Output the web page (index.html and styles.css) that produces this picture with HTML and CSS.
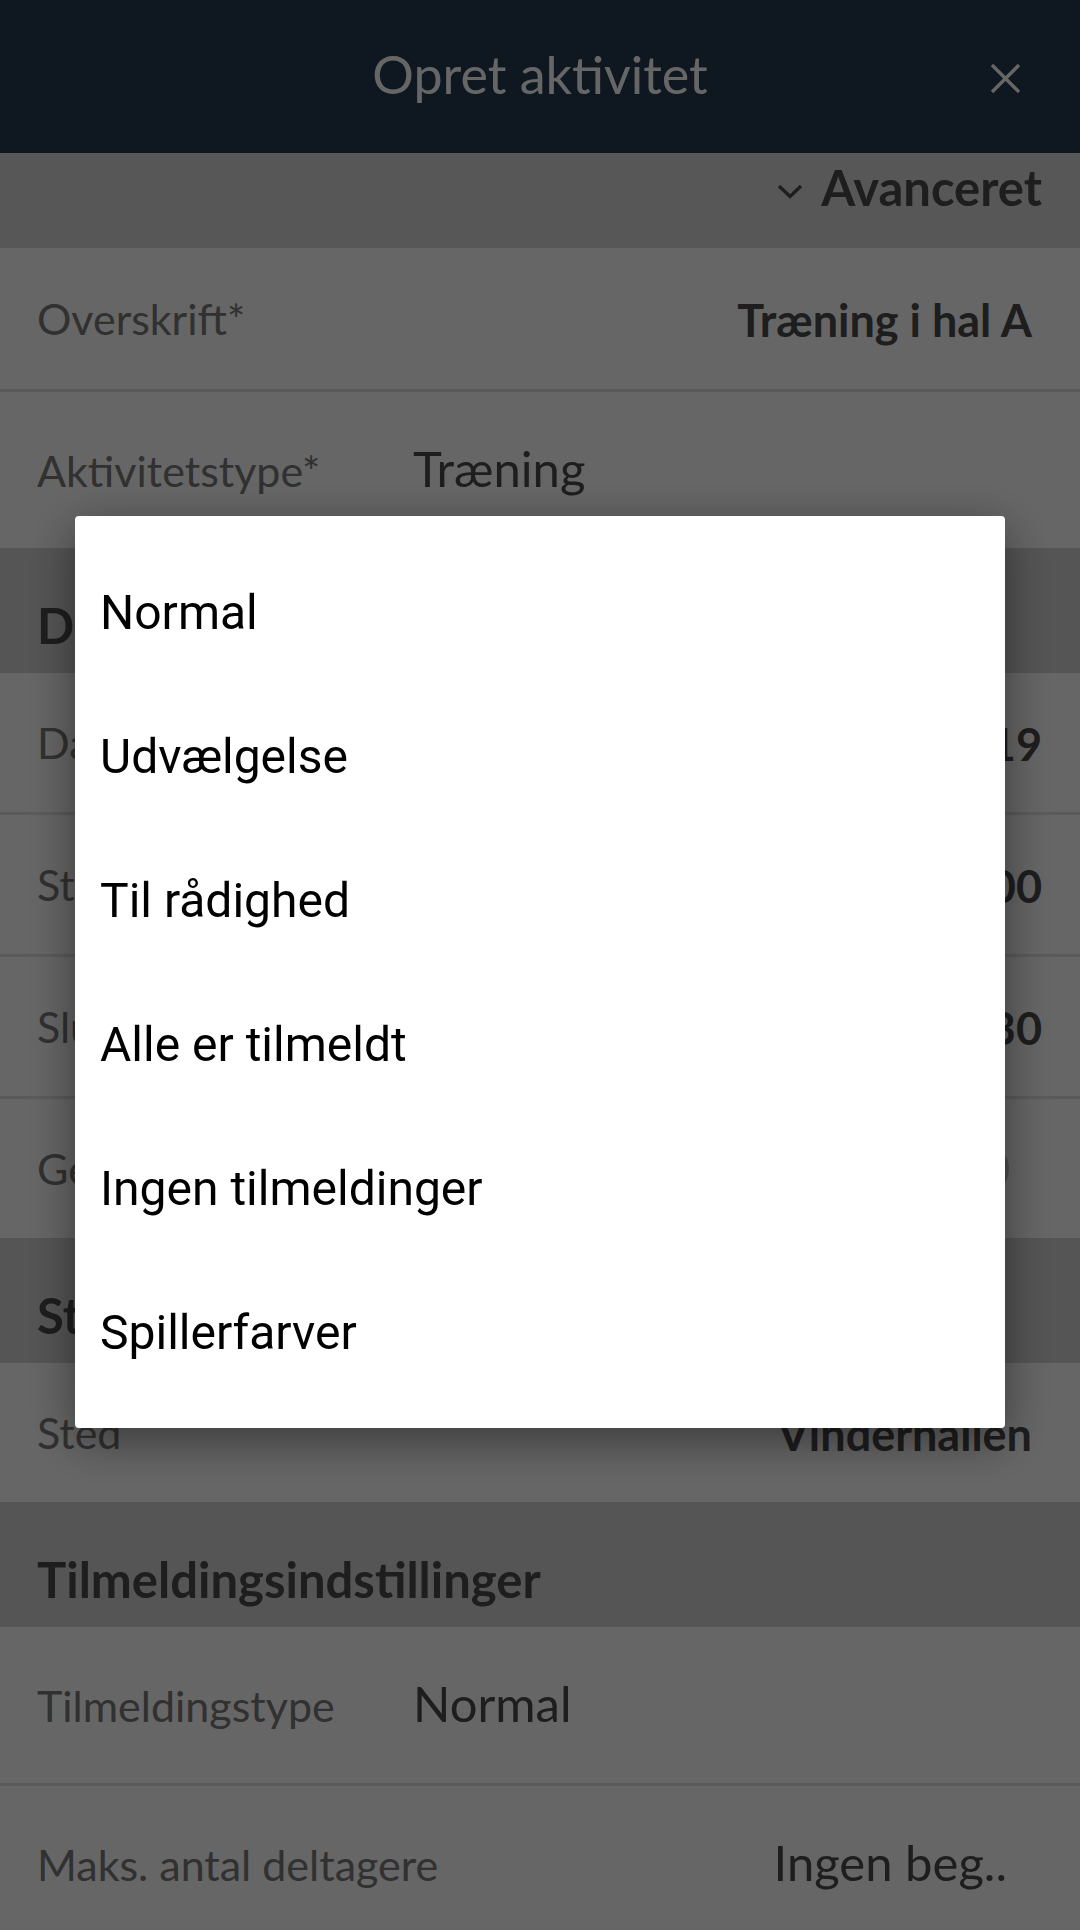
FILE: index.html
```html
<!DOCTYPE html>
<html>
<head>
	<title>Opret aktivitet</title>
	<meta charset="utf-8">
	<link rel="stylesheet" href="styles.css">
</head>
<body>

	<div class="screen">
		<!-- top bar -->
		<header class="topbar">
			<span></span>
			<h1 class="title">Opret aktivitet</h1>
			<span class="close">
				<svg width="31" height="31" viewBox="0 0 31 31"><path d="M2 2 L29 29 M29 2 L2 29" stroke="#fff" stroke-width="3.4" fill="none"/></svg>
			</span>
		</header>

		<div class="advanced">
			<svg width="26" height="15" viewBox="0 0 26 15"><path d="M2 2 L13 12.5 L24 2" stroke="#4b4b4b" stroke-width="3.4" fill="none"/></svg>
			<span>Avanceret</span>
		</div>

		<!-- grunddata -->
		<div class="group">
			<div class="row row-first">
				<span class="label">Overskrift*</span>
				<span class="value">Træning i hal A</span>
			</div>
			<div class="row row-pick">
				<span class="label">Aktivitetstype*</span>
				<span class="pick">Træning</span>
			</div>
		</div>

		<h2 class="section">Dato og tid</h2>
		<div class="group">
			<div class="row">
				<span class="label">Dato</span>
				<span class="value value-wide">tir. 12. mar. 2019</span>
			</div>
			<div class="row">
				<span class="label">Start</span>
				<span class="value value-wide">17:00</span>
			</div>
			<div class="row">
				<span class="label">Slut</span>
				<span class="value value-wide">18:30</span>
			</div>
			<div class="row">
				<span class="label">Gentag</span>
				<span class="dot"></span>
			</div>
		</div>

		<h2 class="section">Sted</h2>
		<div class="group">
			<div class="row">
				<span class="label">Sted</span>
				<span class="value">Vinderhallen</span>
			</div>
		</div>

		<h2 class="section">Tilmeldingsindstillinger</h2>
		<div class="group">
			<div class="row row-pick">
				<span class="label">Tilmeldingstype</span>
				<span class="pick">Normal</span>
			</div>
			<div class="row row-pick">
				<span class="label">Maks. antal deltagere</span>
				<span class="pick pick-right">Ingen beg..</span>
			</div>
		</div>
	</div>

	<!-- valg af tilmeldingstype -->
	<div class="overlay">
		<div class="dialog">
			<div class="option">Normal</div>
			<div class="option">Udvælgelse</div>
			<div class="option">Til rådighed</div>
			<div class="option">Alle er tilmeldt</div>
			<div class="option">Ingen tilmeldinger</div>
			<div class="option">Spillerfarver</div>
		</div>
	</div>

</body>
</html>
```

FILE: styles.css
```css
	body {
		margin: 0;
		font-family: Lato, "Open Sans", sans-serif;
		background: #fff;
		overflow: hidden;
	}
	.screen{
		width: 1080px;
	}
	.topbar{
		height: 153px;
		background: #263a50;
		display: grid;
		grid-template-columns: 1fr auto 1fr;
		align-items: center;
	}
	.title{
		margin: 0;
		font-weight: normal;
		font-size: 52px;
		color: #fff;
		padding-bottom: 6px;
	}
	.close{
		justify-self: end;
		margin-right: 59px;
		height: 31px;
		margin-top: 4px;
	}
	.close svg{
		display: block;
	}
	.advanced{
		height: 70px;
		padding: 5px 38px 20px 0;
		background: #dadada;
		display: flex;
		justify-content: flex-end;
		align-items: flex-start;
		gap: 18px;
		font-weight: bold;
		font-size: 49px;
		line-height: 1.2;
		color: #4b4b4b;
	}
	.advanced svg{
		margin-top: 26px;
	}
	.row{
		height: 139px;
		padding: 0 48px 0 37px;
		display: flex;
		align-items: center;
		justify-content: space-between;
		background: #fff;
	}
	.row + .row{
		border-top: 3px solid #e2e2e2;
	}
	.row-first{
		height: 141px;
	}
	.row-pick{
		height: 156px;
		justify-content: flex-start;
	}
	.label{
		font-size: 43px;
		color: #7a7a7a;
		white-space: nowrap;
	}
	.row-pick .label{
		min-width: 376px;
		flex: none;
	}
	.value{
		font-size: 45px;
		font-weight: bold;
		color: #4b4b4b;
		padding-top: 2px;
	}
	.value-wide{
		margin-right: -10px;
	}
	.pick{
		font-size: 49px;
		color: #4b4b4b;
		padding-bottom: 4px;
		white-space: nowrap;
	}
	.pick-right{
		margin-left: auto;
		margin-right: 25px;
	}
	.dot{
		width: 56px;
		height: 56px;
		border-radius: 50%;
		background: #c0c0c0;
		margin-right: 23px;
	}
	.section{
		margin: 0;
		height: 97px;
		padding: 28px 0 0 37px;
		background: #d4d4d4;
		display: flex;
		align-items: center;
		font-size: 49px;
		font-weight: bold;
		color: #4b4b4b;
	}

	/* dialog over siden */
	.overlay{
		position: fixed;
		left: 0;
		top: 0;
		right: 0;
		bottom: 0;
		background: rgba(0,0,0,0.6);
		display: flex;
		justify-content: center;
		align-items: center;
		padding-top: 14px;
	}
	.dialog{
		width: 930px;
		padding: 24px 0;
		background: #fff;
		border-radius: 4px;
		box-shadow: 0 12px 48px rgba(0,0,0,0.45);
	}
	.option{
		height: 144px;
		padding-left: 25px;
		display: flex;
		align-items: center;
		font-family: Roboto, "Noto Sans", sans-serif;
		font-size: 48px;
		color: #000;
	}
```
